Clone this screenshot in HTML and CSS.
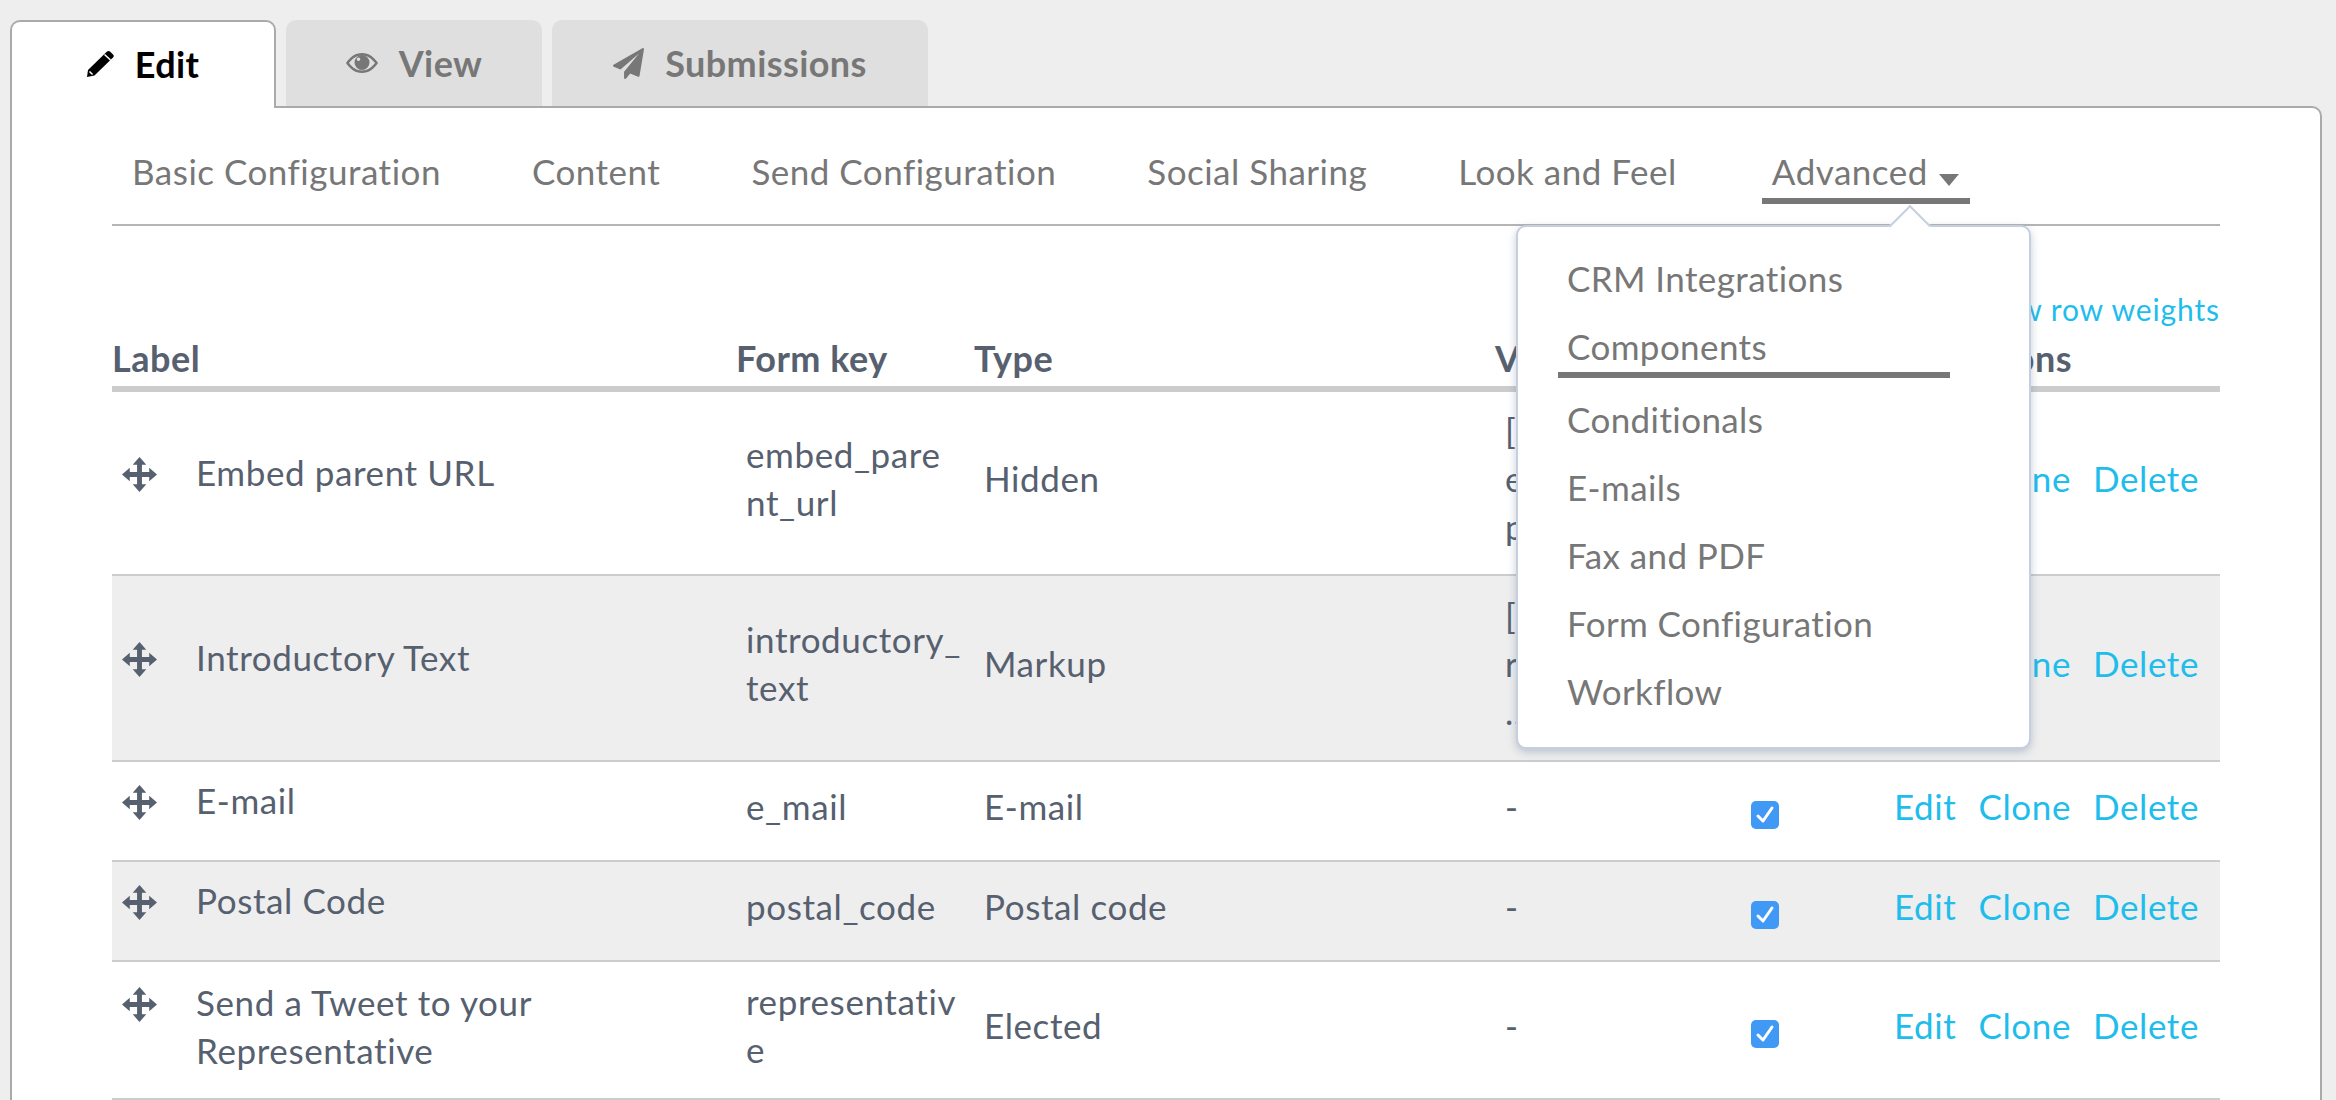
FILE: index.html
```html
<!DOCTYPE html>
<html lang="en">
<head>
<meta charset="utf-8">
<title>Webform components</title>
<link rel="stylesheet" href="styles.css">
</head>
<body>
<svg class="sprites" width="0" height="0">
  <defs>
    <symbol id="move" viewBox="0 0 36 36">
      <path d="M18 0l7 8h-4.500v7.500H28V11l8 7-8 7v-4.500h-7.500V28H25l-7 8-7-8h4.500v-7.500H8V25l-8-7 8-7v4.500h7.500V8H11z"/>
    </symbol>
  </defs>
</svg>
<nav class="tabs">
  <a class="tab active">
    <svg class="icon-pencil" viewBox="0 0 27 26"><path d="M0 26l1-7L20 .5q2-1 3.500 .5L26 3.500q1.500 1.500 0 3L7.500 24.500z"/><path class="cut" d="M17.500 3.500l6 5.500M2.500 20.500l3 3"/></svg>
    Edit
  </a>
  <a class="tab">
    <svg class="icon-eye" viewBox="0 0 32 20"><path fill-rule="evenodd" d="M0 10C4 4 9 0 16 0s12 4 16 10c-4 6-9 10-16 10S4 16 0 10zm3 0c3 4 7.500 7.500 13 7.500S26 14 29 10c-3-4-7.500-7.500-13-7.500S6 6 3 10z"/><path fill-rule="evenodd" d="M16 2a7.500 7.500 0 1 1 0 15 7.500 7.500 0 0 1 0-15zm-3.500 2.500a1.800 1.800 0 1 0 0 3.600 1.800 1.800 0 0 0 0-3.600z"/></svg>
    View
  </a>
  <a class="tab">
    <svg class="icon-plane" viewBox="0 0 1792 1792"><path d="M1764 11q33 24 27 64l-256 1536q-5 29-32 45-14 8-31 8-11 0-24-5l-453-185-242 295q-18 23-49 23-13 0-22-4-19-7-30.500-23.500t-11.500-36.500v-349l864-1059-1069 925-395-162q-37-14-40-55-2-40 32-59l1664-960q15-9 32-9 20 0 36 11z"/></svg>
    Submissions
  </a>
</nav>
<main class="panel">
  <div class="subnav">
    <a class="subnav-link">Basic Configuration</a>
    <a class="subnav-link">Content</a>
    <a class="subnav-link">Send Configuration</a>
    <a class="subnav-link">Social Sharing</a>
    <a class="subnav-link">Look and Feel</a>
    <a class="subnav-link current">Advanced <span class="caret"></span></a>
  </div>
  <div class="dropdown">
    <a class="dropdown-item">CRM Integrations</a>
    <a class="dropdown-item selected">Components</a>
    <a class="dropdown-item">Conditionals</a>
    <a class="dropdown-item">E-mails</a>
    <a class="dropdown-item">Fax and PDF</a>
    <a class="dropdown-item">Form Configuration</a>
    <a class="dropdown-item">Workflow</a>
  </div>
  <div class="weights"><a class="link">Show row weights</a></div>
  <table class="grid">
    <colgroup>
      <col class="c-label"><col class="c-key"><col class="c-type"><col class="c-value"><col class="c-req"><col class="c-ops">
    </colgroup>
    <thead>
      <tr><th>Label</th><th>Form key</th><th>Type</th><th>Value</th><th>Required</th><th>Operations</th></tr>
    </thead>
    <tbody>
      <tr class="r1">
        <td class="label"><div class="label-in"><svg class="move"><use href="#move"/></svg><span>Embed parent URL</span></div></td>
        <td class="key">embed_pare<wbr>nt_url</td><td>Hidden</td><td class="val">[webform:<br>embed_parent<br>parent_url]</td>
        <td></td>
        <td class="ops"><a class="link">Edit</a><a class="link">Clone</a><a class="link">Delete</a></td>
      </tr>
      <tr class="r2 alt">
        <td class="label"><div class="label-in"><svg class="move"><use href="#move"/></svg><span>Introductory Text</span></div></td>
        <td class="key">introductory_<wbr>text</td><td>Markup</td><td class="val">[markup:<br>rich_text<br>...]</td>
        <td></td>
        <td class="ops"><a class="link">Edit</a><a class="link">Clone</a><a class="link">Delete</a></td>
      </tr>
      <tr class="r3">
        <td class="label"><div class="label-in"><svg class="move"><use href="#move"/></svg><span>E-mail</span></div></td>
        <td class="key">e_mail</td><td>E-mail</td><td class="val">-</td>
        <td class="req"><span class="check"><svg viewBox="0 0 28 28"><path d="M7 15l5 5 9-13"/></svg></span></td>
        <td class="ops"><a class="link">Edit</a><a class="link">Clone</a><a class="link">Delete</a></td>
      </tr>
      <tr class="r4 alt">
        <td class="label"><div class="label-in"><svg class="move"><use href="#move"/></svg><span>Postal Code</span></div></td>
        <td class="key">postal_code</td><td>Postal code</td><td class="val">-</td>
        <td class="req"><span class="check"><svg viewBox="0 0 28 28"><path d="M7 15l5 5 9-13"/></svg></span></td>
        <td class="ops"><a class="link">Edit</a><a class="link">Clone</a><a class="link">Delete</a></td>
      </tr>
      <tr class="r5">
        <td class="label"><div class="label-in"><svg class="move"><use href="#move"/></svg><span>Send a Tweet to your Representative</span></div></td>
        <td class="key">representativ<wbr>e</td><td>Elected</td><td class="val">-</td>
        <td class="req"><span class="check"><svg viewBox="0 0 28 28"><path d="M7 15l5 5 9-13"/></svg></span></td>
        <td class="ops"><a class="link">Edit</a><a class="link">Clone</a><a class="link">Delete</a></td>
      </tr>
    </tbody>
  </table>
</main>
</body>
</html>
```
FILE: styles.css
```css
* { box-sizing: border-box; }
html, body { margin: 0; height: 100%; overflow: hidden; }
body {
  background: #eeeeee;
  font-family: Lato, "Noto Sans", sans-serif;
  font-size: 35px;
  letter-spacing: .6px;
  color: #56606f;
  padding: 20px 0 0 10px;
}
.sprites { position: absolute; }
.tabs { display: flex; gap: 10px; height: 86px; position: relative; z-index: 1; }
.tab {
  display: flex; align-items: center; justify-content: center; gap: 21px;
  background: #dfdfdf; color: #777777; border-radius: 10px 10px 0 0;
  font-size: 36px; font-weight: 700; letter-spacing: .4px;
}
.tab:nth-child(1) { width: 266px; }
.tab:nth-child(2) { width: 256px; }
.tab:nth-child(3) { width: 376px; }
.tab.active {
  background: #fff; color: #000;
  border: 2px solid #aaaaaa; border-bottom: 0; height: 88px; padding-bottom: 2px;
}
.tab svg { fill: currentColor; flex: none; }
.icon-pencil { width: 27px; height: 26px; }
.icon-eye { width: 32px; height: 20px; }
.icon-plane { width: 31px; height: 31px; }
.tab .cut { fill: none; stroke: #fff; stroke-width: 1.500; }
.panel {
  position: relative; background: #fff;
  border: 2px solid #aaaaaa; border-radius: 0 10px 0 0; border-bottom: 0;
  width: 2312px; height: 994px; padding: 0 0 0 100px;
}
.subnav {
  width: 2108px; height: 118px; border-bottom: 2px solid #b5b5b5;
  display: flex; align-items: flex-start; padding: 41px 0 0 20px;
}
.subnav-link { color: #777777; letter-spacing: .5px; line-height: 44px; white-space: nowrap; margin-right: 91px; }
.subnav-link.current {
  margin: 0 0 0 -6px; padding: 0 10px; height: 55px;
  border-bottom: 6px solid #777777; width: 208px;
}
.caret {
  display: inline-block; width: 0; height: 0; vertical-align: -1px; margin-left: 2px;
  border-left: 10px solid transparent; border-right: 10px solid transparent; border-top: 12px solid #777777;
}
.dropdown {
  position: absolute; left: 1504px; top: 117px; width: 515px; height: 524px; z-index: 3;
  background: #fff; border: 2px solid #c5cfe0; border-radius: 10px;
  box-shadow: 0 3px 8px rgba(90, 110, 140, .35); padding: 17px 0 0 49px;
  display: flex; flex-direction: column;
}
.dropdown::before {
  content: ""; position: absolute; left: 377px; top: -16px; width: 28px; height: 28px;
  background: #fff; border: 2px solid #c5cfe0; border-right: 0; border-bottom: 0;
  transform: rotate(45deg);
}
.dropdown-item { color: #777777; height: 68px; line-height: 44px; padding-top: 12px; letter-spacing: .4px; white-space: nowrap; flex: none; }
.dropdown-item.selected { margin-left: -9px; padding-left: 9px; width: 392px; height: 66px; border-bottom: 6px solid #777777; margin-bottom: 7px; }
.weights { text-align: right; width: 2108px; padding-top: 64px; height: 105px; font-size: 30px; letter-spacing: .9px; line-height: 38px; }
.link { color: #1fbdec; }
.grid { border-collapse: collapse; table-layout: fixed; width: 2108px; }
.c-label { width: 624px; } .c-key { width: 238px; } .c-type { width: 521px; }
.c-value { width: 236px; } .c-req { width: 157px; } .c-ops { width: 332px; }
th { text-align: left; font-weight: 700; font-size: 36px; letter-spacing: .5px; line-height: 40px; height: 58px; vertical-align: top; padding: 7px 0 0; color: #56606f; border-bottom: 6px solid #cccccc; }
td { padding: 0 10px 11px; line-height: 48px; vertical-align: middle; border-bottom: 2px solid #cccccc; }
td.val { padding-right: 0; white-space: nowrap; overflow: hidden; }
td.key { padding-right: 0; }
.alt td { background: #eeeeee; }
.r1 td, .r2 td { height: 186px; }
.r3 td, .r4 td { height: 100px; }
.r5 td { height: 138px; }
.label-in { display: flex; gap: 39px; align-items: flex-start; }
.label-in span { margin-top: -1px; }
.move { flex: none; width: 35px; height: 35px; fill: #56606f; margin-top: 8px; }
td.label { padding-bottom: 21px; padding-right: 60px; }
.r5 td.label { padding-bottom: 8px; }
.check { display: block; width: 28px; height: 28px; border-radius: 5px; background: #4099f5; margin: 0 0 0 10px; position: relative; top: 9px; }
.check svg { display: block; width: 28px; height: 28px; fill: none; stroke: #fff; stroke-width: 3; stroke-linecap: round; stroke-linejoin: round; }
.ops { text-align: right; white-space: nowrap; padding-left: 0; padding-right: 21px; }
.ops .link + .link { margin-left: 22px; }
```
